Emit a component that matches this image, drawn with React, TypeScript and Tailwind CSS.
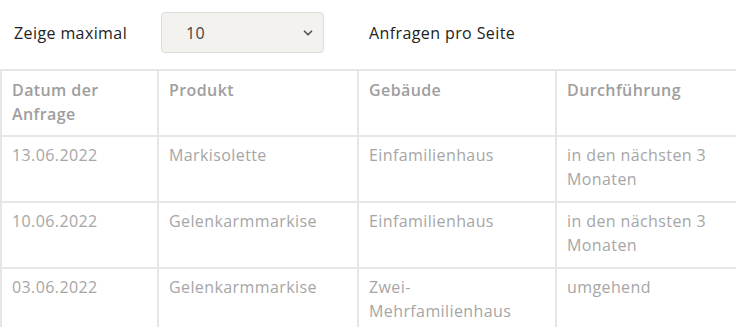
import { ChevronDown } from 'lucide-react'

const rows = [
  { datum: '13.06.2022', produkt: 'Markisolette', gebaeude: 'Einfamilienhaus', durchfuehrung: 'in den nächsten 3 Monaten' },
  { datum: '10.06.2022', produkt: 'Gelenkarmmarkise', gebaeude: 'Einfamilienhaus', durchfuehrung: 'in den nächsten 3 Monaten' },
  { datum: '03.06.2022', produkt: 'Gelenkarmmarkise', gebaeude: 'Zwei-Mehrfamilienhaus', durchfuehrung: 'umgehend' },
]

export default function App() {
  return (
    <div className="w-[736px] h-[327px] overflow-hidden bg-white text-[16px] leading-6 tracking-[0.4px]" style={{ fontFamily: '"Open Sans", "Noto Sans", sans-serif' }}>
      {/* Page size picker */}
      <div className="flex items-center h-[65px] pl-[14px]">
        <span className="w-[147px] text-[#222]">Zeige maximal</span>
        <div className="relative w-[163px] h-[41px]">
          <select
            defaultValue="10"
            className="appearance-none w-full h-full rounded border border-[#dcdcdc] bg-[#f3f2ef] pl-6 text-[#444] outline-none"
            style={{ fontFamily: 'inherit' }}
          >
            <option value="10">10</option>
            <option value="25">25</option>
            <option value="50">50</option>
          </select>
          <ChevronDown size={14} strokeWidth={3} className="absolute right-[9px] top-[14px] text-[#555] pointer-events-none" />
        </div>
        <span className="ml-[45px] text-[#222]">Anfragen pro Seite</span>
      </div>

      {/* Requests table */}
      <table className="w-[760px] mt-[4px] border-collapse table-fixed">
        <colgroup>
          <col className="w-[157px]" />
          <col className="w-[200px]" />
          <col className="w-[198px]" />
          <col className="w-[205px]" />
        </colgroup>
        <thead>
          <tr className="h-[66px]">
            {['Datum der Anfrage', 'Produkt', 'Gebäude', 'Durchführung'].map((h) => (
              <th key={h} className="border-2 border-[#e6e6e6] px-[10px] pt-[7px] pb-[9px] text-left align-top font-semibold text-[#9e9e9e]">
                {h}
              </th>
            ))}
          </tr>
        </thead>
        <tbody>
          {rows.map((r) => (
            <tr key={r.datum} className="h-[66px]">
              <td className="border-2 border-[#e6e6e6] px-[10px] pt-[6px] pb-[10px] align-top text-[#a6a6a6]">{r.datum}</td>
              <td className="border-2 border-[#e6e6e6] px-[10px] pt-[6px] pb-[10px] align-top text-[#a6a6a6]">{r.produkt}</td>
              <td className="border-2 border-[#e6e6e6] px-[10px] pt-[6px] pb-[10px] align-top text-[#a6a6a6]">{r.gebaeude}</td>
              <td className="border-2 border-[#e6e6e6] px-[10px] pt-[6px] pb-[10px] align-top text-[#a6a6a6]">{r.durchfuehrung}</td>
            </tr>
          ))}
        </tbody>
      </table>
    </div>
  )
}
